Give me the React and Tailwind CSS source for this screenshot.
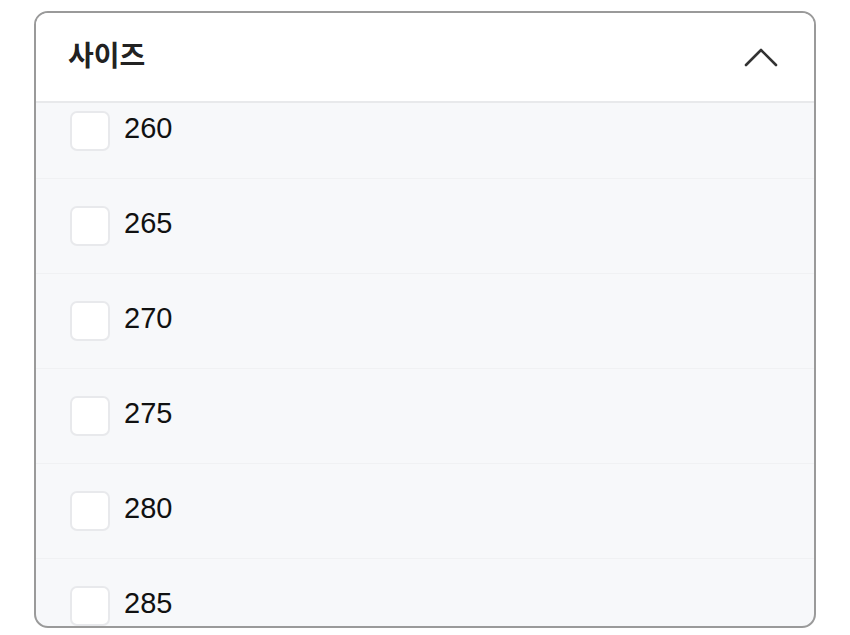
import React from "react";

const sizes = ["260", "265", "270", "275", "280", "285"];

function SizeRow({ label }) {
  return (
    <label className="flex h-[95px] items-center border-b border-[#f0f1f3] px-[34px]">
      <span className="h-[40px] w-[40px] shrink-0 rounded-[7px] border-2 border-[#e8e9ec] bg-white" />
      <span className="mb-[5px] ml-[14px] text-[29px] leading-none text-[#111]">{label}</span>
    </label>
  );
}

export default function App() {
  return (
    <div
      className="h-[635px] w-[850px] bg-white pt-[11px] pl-[34px]"
      style={{ fontFamily: '"Liberation Sans", "Noto Sans CJK KR", sans-serif' }}
    >
      <div className="flex h-[617px] w-[782px] flex-col overflow-hidden rounded-[14px] border-2 border-[#9a9a9a] bg-[#f7f8fa]">
        {/* Header */}
        <div className="flex h-[90px] shrink-0 items-center justify-between border-b-2 border-[#e8e9eb] bg-white pl-[32px] pr-[36px]">
          <span className="text-[28px] font-bold leading-none text-[#222]">사이즈</span>
          <svg width="34" height="20" viewBox="0 0 34 20" fill="none">
            <path d="M2 18 L17 3 L32 18" stroke="#333" strokeWidth="2.6" strokeLinecap="round" strokeLinejoin="round" />
          </svg>
        </div>

        {/* List (scrolled a little) */}
        <div className="flex-1 overflow-hidden">
          <div className="-mt-[19px]">
            {sizes.map((s) => (
              <SizeRow key={s} label={s} />
            ))}
          </div>
        </div>
      </div>
    </div>
  );
}
